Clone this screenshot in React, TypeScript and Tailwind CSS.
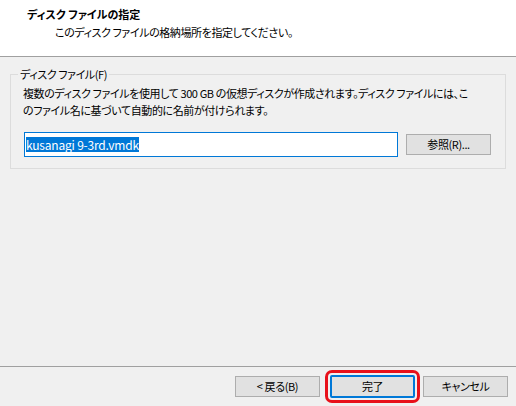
const font = "[font-family:'Noto_Sans_CJK_JP','Noto_Sans',sans-serif] [font-feature-settings:'palt']";

export default function App() {
  return (
    <div className={`flex h-[406px] w-[516px] flex-col bg-[#f0f0f0] text-[11px] leading-[17px] tracking-[-0.4px] text-black ${font}`}>
      {/* Header */}
      <div className="h-[57px] shrink-0 border-b border-[#a0a0a0] bg-white pt-[6px]">
        <p className="pl-[27px] font-bold tracking-normal">ディスク ファイルの指定</p>
        <p className="mt-[1px] pl-[55px]">このディスク ファイルの格納場所を指定してください。</p>
      </div>

      {/* Body */}
      <div className="flex-1 px-[10px] pt-[9px]">
        <fieldset className="w-[496px] border border-[#dcdcdc] px-[12px] pb-[11px]">
          <legend className="ml-[-5px] px-[2px] leading-[16px]">ディスク ファイル(F)</legend>
          <p className="mt-[3px] whitespace-nowrap">
            複数のディスク ファイルを使用して 300 GB の仮想ディスクが作成されます。ディスク ファイルには、こ
            <br />
            のファイル名に基づいて自動的に名前が付けられます。
          </p>
          <div className="mt-[13px] flex items-center">
            <div className="ml-[1px] flex h-[25px] w-[374px] items-center border border-[#0078d7] bg-white px-[1px] text-[12px] tracking-[-0.2px]">
              <span className="bg-[#0078d7] leading-[15px] text-white">kusanagi 9-3rd.vmdk</span>
            </div>
            <button className="ml-[8px] h-[21px] w-[85px] border border-[#adadad] bg-[#e1e1e1] leading-[19px]">
              参照(R)...
            </button>
          </div>
        </fieldset>
      </div>

      {/* Footer */}
      <div className="flex h-[40px] shrink-0 items-start border-t border-[#a0a0a0] pl-[235px] pt-[9px]">
        <button className="h-[21px] w-[85px] border border-[#adadad] bg-[#e1e1e1] leading-[19px]">
          &lt; 戻る(B)
        </button>
        <button className="-mt-[1px] ml-[10px] h-[23px] w-[85px] rounded-[2px] border-2 border-[#0078d7] bg-[#e1e1e1] leading-[19px] outline outline-[3px] outline-offset-[2px] outline-[#e8101a]">
          完了
        </button>
        <button className="ml-[8px] h-[21px] w-[85px] border border-[#adadad] bg-[#e1e1e1] leading-[19px]">
          キャンセル
        </button>
      </div>
    </div>
  );
}
